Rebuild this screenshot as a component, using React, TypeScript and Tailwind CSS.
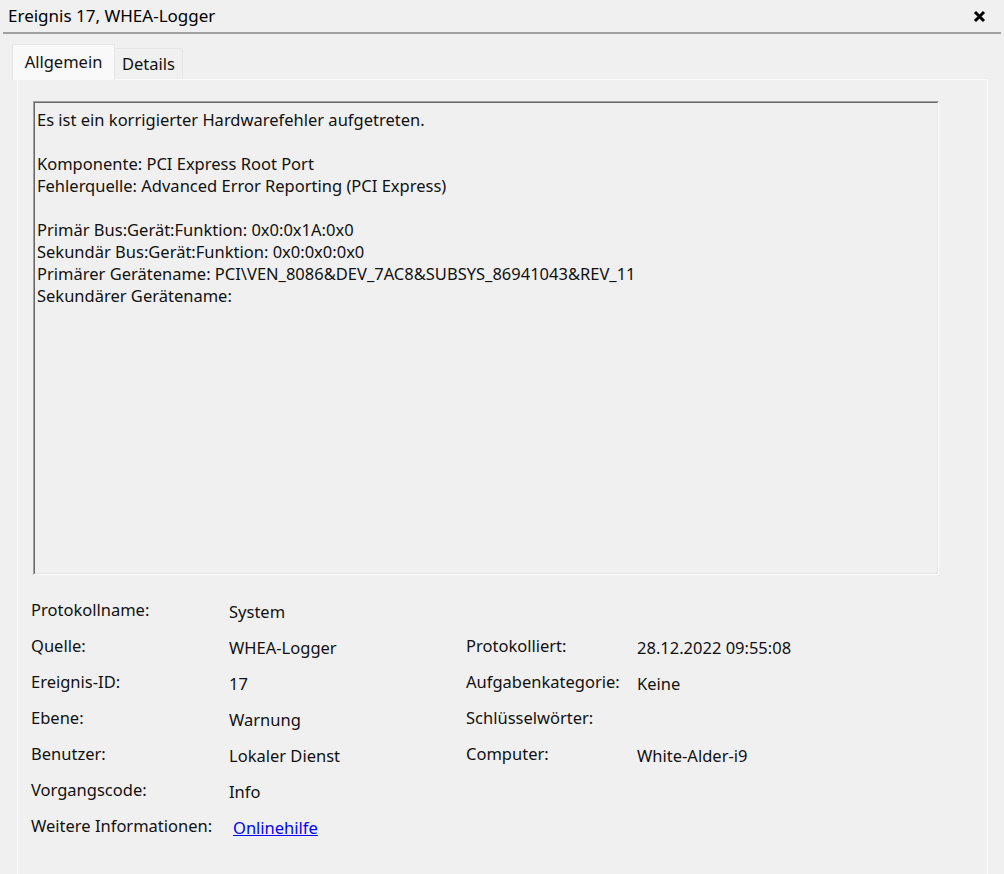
const font = { fontFamily: '"Noto Sans", "Open Sans", sans-serif' };

const left = [
  ['Protokollname:', 'System'],
  ['Quelle:', 'WHEA-Logger'],
  ['Ereignis-ID:', '17'],
  ['Ebene:', 'Warnung'],
  ['Benutzer:', 'Lokaler Dienst'],
  ['Vorgangscode:', 'Info'],
];

const right: (string[] | null)[] = [
  null,
  ['Protokolliert:', '28.12.2022 09:55:08'],
  ['Aufgabenkategorie:', 'Keine'],
  ['Schlüsselwörter:', ''],
  ['Computer:', 'White-Alder-i9'],
  null,
];

const lines = [
  'Es ist ein korrigierter Hardwarefehler aufgetreten.',
  '',
  'Komponente: PCI Express Root Port',
  'Fehlerquelle: Advanced Error Reporting (PCI Express)',
  '',
  'Primär Bus:Gerät:Funktion: 0x0:0x1A:0x0',
  'Sekundär Bus:Gerät:Funktion: 0x0:0x0:0x0',
  'Primärer Gerätename: PCI\\VEN_8086&DEV_7AC8&SUBSYS_86941043&REV_11',
  'Sekundärer Gerätename:',
];

export default function App() {
  return (
    <div className="w-[1004px] h-[874px] bg-[#f0f0f0] text-[#111] overflow-hidden flex flex-col" style={font}>
      {/* Title bar */}
      <div className="h-[32px] flex items-center justify-between pl-2 pr-[18px]">
        <span className="text-[17px] text-black">Ereignis 17, WHEA-Logger</span>
        <svg width="13" height="13" viewBox="0 0 13 13">
          <path d="M2 2 L11 11 M11 2 L2 11" stroke="#000" strokeWidth="3" />
        </svg>
      </div>
      <div className="mx-[3px] h-[2px] bg-[#a0a0a0]" />

      {/* Tabs */}
      <div className="flex items-end pl-3 mt-[10px] h-[35px]">
        <div className="w-[103px] h-[36px] bg-[#f9f9f9] border border-[#e6e6e6] border-b-0 flex items-center justify-center text-[16.5px] relative z-10 -mb-px">
          Allgemein
        </div>
        <div className="w-[68px] h-[31px] bg-[#f0f0f0] border border-[#e6e6e6] border-l-0 border-b-0 flex items-center justify-center text-[16.5px]">
          Details
        </div>
      </div>

      {/* Panel */}
      <div className="ml-[17px] w-[971px] flex-1 border border-[#fcfcfc] border-b-0 pl-[15px] pt-[21px]">
        <div className="w-[906px] h-[474px] border-t border-l border-[#a0a0a0] border-b border-r border-b-white border-r-white">
          <div className="h-full border-t border-l border-[#696969] border-b border-r border-b-[#e3e3e3] border-r-[#e3e3e3] pl-[2px] pt-[6px] text-[16.5px] leading-[22px]">
            {lines.map((l, i) => (
              <div key={i} className="h-[22px] whitespace-pre">{l}</div>
            ))}
          </div>
        </div>

        <div className="mt-[25px] -ml-[2px] text-[16.5px]">
          {left.map((row, i) => (
            <div key={i} className="h-[36px] flex">
              <div className="w-[198px] -mt-[2px]">{row[0]}</div>
              <div className="w-[237px]">{row[1]}</div>
              {right[i] && (
                <>
                  <div className="w-[171px] -mt-[2px]">{right[i]![0]}</div>
                  <div>{right[i]![1]}</div>
                </>
              )}
            </div>
          ))}
          <div className="h-[36px] flex">
            <div className="w-[202px] -mt-[2px]">Weitere Informationen:</div>
            <a className="text-[#0000ff] underline cursor-pointer">Onlinehilfe</a>
          </div>
        </div>
      </div>
    </div>
  );
}
